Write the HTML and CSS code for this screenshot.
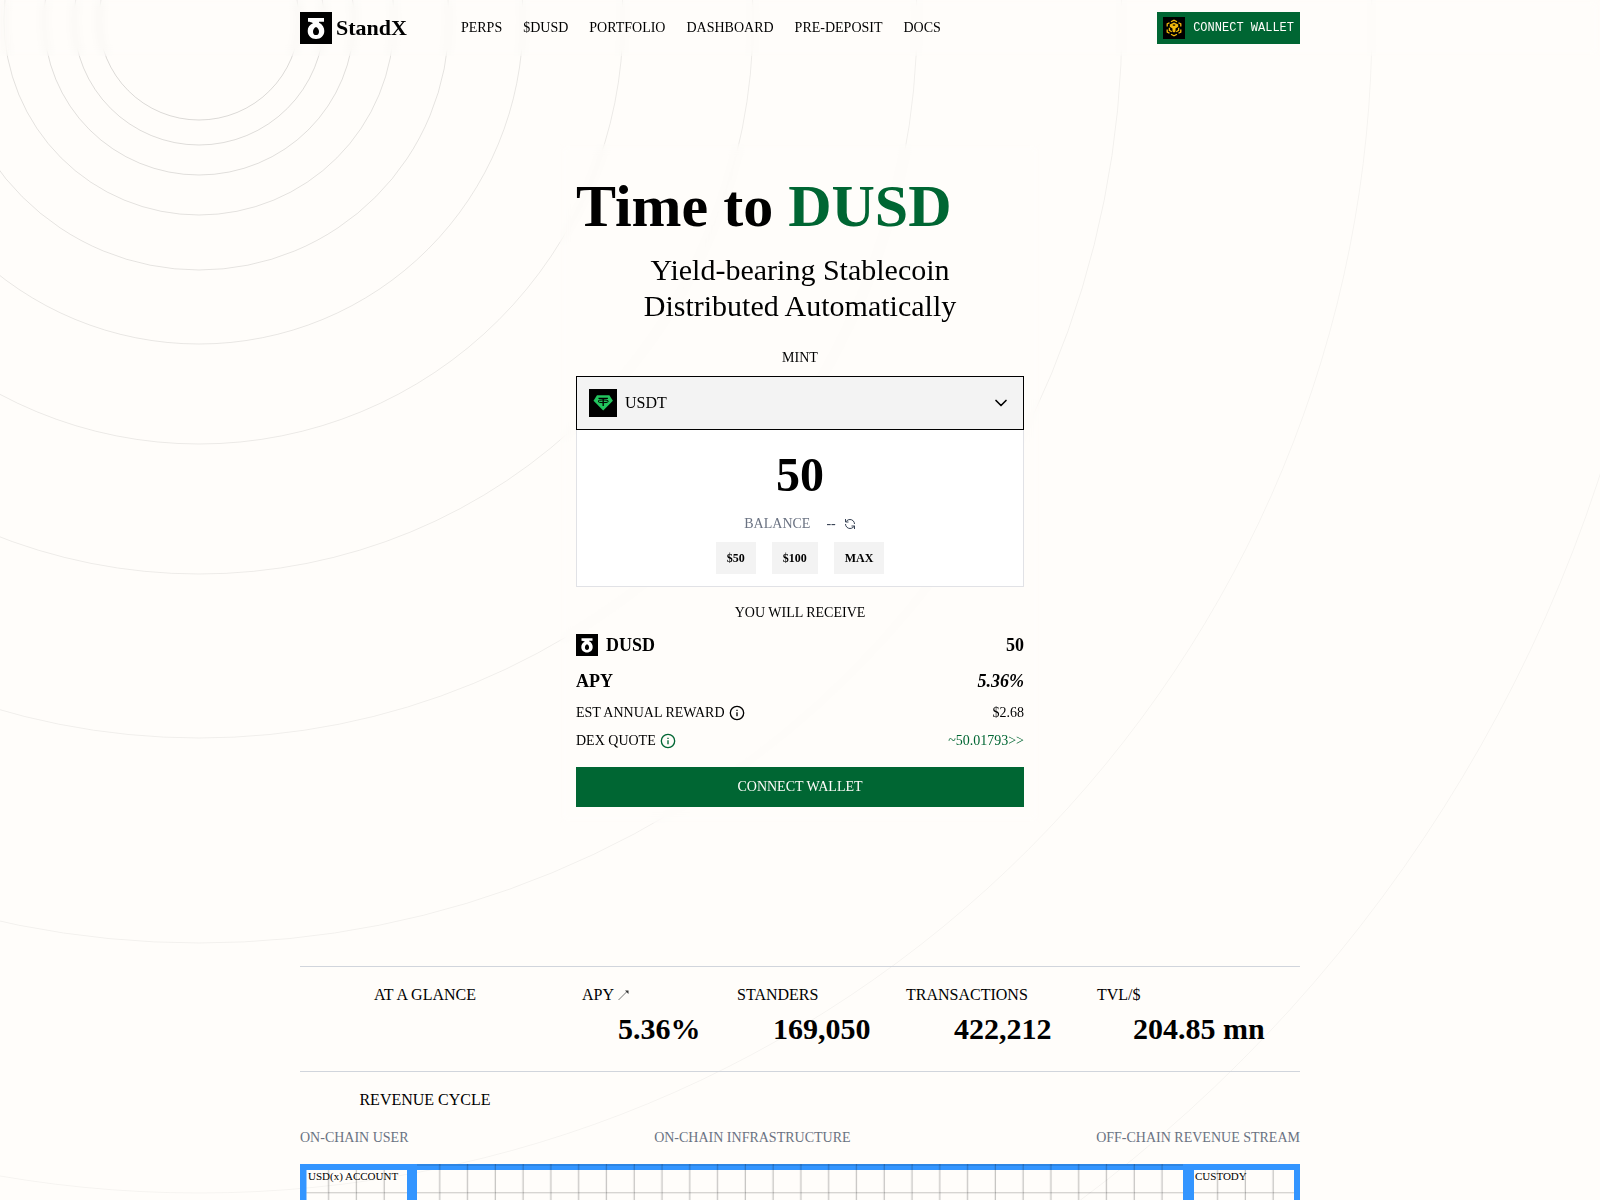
FILE: index.html
```html
<!DOCTYPE html>
<html lang="en">
<head>
  <meta charset="UTF-8">
  <meta name="viewport" content="width=device-width, initial-scale=1.0">
  <title>StandX</title>
  <link rel="stylesheet" href="styles.css">
</head>
<body>
  <svg class="rings" aria-hidden="true">
    <g fill="none" stroke="#000">
      <circle cx="199" cy="20" r="100" stroke-opacity="0.14"/>
      <circle cx="199" cy="20" r="125" stroke-opacity="0.13"/>
      <circle cx="199" cy="20" r="155" stroke-opacity="0.12"/>
      <circle cx="199" cy="20" r="195" stroke-opacity="0.11"/>
      <circle cx="199" cy="20" r="250" stroke-opacity="0.1"/>
      <circle cx="199" cy="20" r="324" stroke-opacity="0.09"/>
      <circle cx="199" cy="20" r="424" stroke-opacity="0.08"/>
      <circle cx="199" cy="20" r="554" stroke-opacity="0.07"/>
      <circle cx="199" cy="20" r="718" stroke-opacity="0.06"/>
      <circle cx="199" cy="20" r="923" stroke-opacity="0.05"/>
      <circle cx="199" cy="20" r="1173" stroke-opacity="0.04"/>
      <circle cx="199" cy="20" r="1473" stroke-opacity="0.04"/>
    </g>
  </svg>

  <svg class="symbols" aria-hidden="true">
    <symbol id="logo" viewBox="0 0 32 32">
      <rect width="32" height="32"/>
      <path fill="#fff" fill-rule="evenodd" d="M8 6h16v3.800h-4.500c-.6 0-.8.500-.3.900C22.500 12.500 24.300 15.600 24.300 19c0 4.700-3.500 8-8.300 8s-8.300-3.300-8.300-8c0-3.700 2-6.400 5.300-7.700C11.700 10.300 10 9.800 8 9.800zM16 15c-2 1-3 2.600-3 4.700 0 2 1.100 3.400 3 3.400s3-1.400 3-3.400c0-2.100-1-3.700-3-4.700z"/>
    </symbol>
    <symbol id="info" viewBox="0 0 24 24">
      <circle cx="12" cy="12" r="10" fill="none" stroke="currentColor" stroke-width="2"/>
      <path fill="currentColor" d="M11 7h2v2h-2zM11 11h2v6h-2z"/>
    </symbol>
  </svg>

  <header class="header">
    <div class="header-inner">
      <a class="brand" href="#">
        <svg class="brand-icon" aria-hidden="true"><use href="#logo"/></svg>
        <span>StandX</span>
      </a>
      <nav class="nav">
        <a href="#">PERPS</a>
        <a href="#">$DUSD</a>
        <a href="#">PORTFOLIO</a>
        <a href="#">DASHBOARD</a>
        <a href="#">PRE-DEPOSIT</a>
        <a href="#">DOCS</a>
      </nav>
      <button class="wallet" type="button">
        <svg width="22" height="22" viewBox="0 0 22 22" aria-hidden="true">
          <rect width="22" height="22"/>
          <g fill="none" stroke="#f0b90b" stroke-width="1.300">
            <path d="M8 4.800 11 3.200l3 1.600M15.500 5.700l2.300 1.300v2.600M17.800 12.400V15l-2.300 1.300M14 17.200l-3 1.600-3-1.600M6.500 16.300 4.200 15v-2.600M4.200 9.600V7l2.300-1.300"/>
            <path d="M6.400 10.800v2.600l2.400 1.400M15.600 10.800v2.600l-2.400 1.400"/>
          </g>
          <path fill="#f0b90b" d="M6.800 7.600 11 5.600l4.200 2v2.200l-2.700 1.600v3.200L11 15.600l-1.500-1v-3.200L6.800 9.800z"/>
          <path d="m11 7.200 1.700.8-1.700 1-1.700-1z"/>
        </svg>
        CONNECT WALLET
      </button>
    </div>
  </header>

  <main class="page">
    <section class="mint">
      <h1 class="title">Time to <span class="green">DUSD</span></h1>
      <p class="subtitle">Yield-bearing Stablecoin<br>Distributed Automatically</p>

      <label class="caption mint-caption" for="token">MINT</label>
      <div class="token">
        <svg width="28" height="28" viewBox="0 0 28 28" aria-hidden="true">
          <rect width="28" height="28"/>
          <path fill="#22c55e" d="M8 6.300h12.400l3.500 5.500L14.200 21.600 4.500 11.800z"/>
          <path fill="none" stroke="#000" stroke-width="1.300" d="M9.500 9.300h9.400M14.200 9.300v7.700"/>
          <ellipse cx="14.200" cy="12.300" rx="5.200" ry="1.400" fill="none" stroke="#000"/>
        </svg>
        <select class="token-select" id="token">
          <option>USDT</option>
          <option>USDC</option>
        </select>
        <svg class="chevron" width="20" height="20" viewBox="0 0 24 24" aria-hidden="true">
          <path fill="none" stroke="#000" stroke-width="2" stroke-linecap="round" stroke-linejoin="round" d="m6 9 6 6 6-6"/>
        </svg>
      </div>
      <div class="amount">
        <input class="amount-input" type="text" value="50" inputmode="decimal" aria-label="Amount">
        <div class="balance">
          <span>BALANCE</span>
          <span class="balance-value">--
            <button class="refresh" type="button" aria-label="Refresh balance">
              <svg width="12" height="12" viewBox="0 0 24 24" fill="none" stroke="currentColor" stroke-width="2" aria-hidden="true">
                <path d="M21 12a9 9 0 0 0-9-9 9.800 9.800 0 0 0-6.700 2.700L3 8M3 2v6h6M3 12a9 9 0 0 0 9 9 9.800 9.800 0 0 0 6.700-2.700L21 16M15 16h6v6"/>
              </svg>
            </button>
          </span>
        </div>
        <div class="presets">
          <button type="button">$50</button>
          <button type="button">$100</button>
          <button type="button">MAX</button>
        </div>
      </div>

      <p class="caption receive-caption">YOU WILL RECEIVE</p>
      <div class="row row-lg">
        <span class="row-token"><svg width="22" height="22" aria-hidden="true"><use href="#logo"/></svg>DUSD</span>
        <span>50</span>
      </div>
      <div class="row row-lg">
        <span>APY</span>
        <em>5.36%</em>
      </div>
      <div class="row">
        <span class="row-label">EST ANNUAL REWARD <svg width="16" height="16" aria-hidden="true"><use href="#info"/></svg></span>
        <span>$2.68</span>
      </div>
      <div class="row">
        <span class="row-label">DEX QUOTE <svg class="green" width="16" height="16" aria-hidden="true"><use href="#info"/></svg></span>
        <a class="green" href="#">~50.01793&gt;&gt;</a>
      </div>
      <button class="connect" type="button">CONNECT WALLET</button>
    </section>

    <section class="glance">
      <h2 class="section-title">AT A GLANCE</h2>
      <div class="stats">
        <div>
          <div class="stat-label">APY
            <svg width="12" height="12" viewBox="0 0 12 12" aria-hidden="true">
              <path stroke="#555" stroke-width="0.800" d="M.5 11 9.500 2"/>
              <path fill="#333" d="M7 1.500h3.500V5z"/>
            </svg>
          </div>
          <div class="stat-value">5.36%</div>
        </div>
        <div>
          <div class="stat-label">STANDERS</div>
          <div class="stat-value">169,050</div>
        </div>
        <div>
          <div class="stat-label">TRANSACTIONS</div>
          <div class="stat-value stat-value-wide">422,212</div>
        </div>
        <div>
          <div class="stat-label">TVL/$</div>
          <div class="stat-value">204.85 mn</div>
        </div>
      </div>
    </section>

    <section class="revenue">
      <h2 class="section-title">REVENUE CYCLE</h2>
      <div class="revenue-heads">
        <span>ON-CHAIN USER</span>
        <span>ON-CHAIN INFRASTRUCTURE</span>
        <span>OFF-CHAIN REVENUE STREAM</span>
      </div>
      <svg class="diagram" viewBox="0 0 1000 280" preserveAspectRatio="xMidYMin slice">
        <defs>
          <pattern id="cells" width="27.780" height="27.780" patternUnits="userSpaceOnUse" x="0.500" y="0.500">
            <path d="M28 0V28M0 .5H28" fill="none" stroke="#000" stroke-opacity="0.220"/>
            <path d="M.5 0V28" fill="none" stroke="#000" stroke-opacity="0.220"/>
          </pattern>
        </defs>
        <path fill="#3395ff" fill-rule="evenodd" d="M0 0h1000v280H0zM6.500 6h100.500v268H6.500zM117 6h766v268H117zM894 6h100v268H894z"/>
        <rect x="6.500" y="6" width="100.500" height="268" fill="url(#cells)"/>
        <rect x="117" y="0" width="766" height="274" fill="url(#cells)"/>
        <rect x="894" y="6" width="100" height="268" fill="url(#cells)"/>
        <text x="8" y="16">USD(x) ACCOUNT</text>
        <text x="895" y="16">CUSTODY</text>
      </svg>
    </section>
  </main>
</body>
</html>
```
FILE: styles.css
```css
* {
  box-sizing: border-box;
}

body {
  margin: 0;
  min-height: 100vh;
  display: flex;
  flex-direction: column;
  position: relative;
  background-color: #fffdfa;
  color: #000;
  font-family: "Liberation Serif", "Times New Roman", serif;
  font-size: 14px;
  line-height: 20px;
}

h1, h2, p {
  margin: 0;
}

a {
  color: inherit;
  text-decoration: none;
}

button, input, select {
  font: inherit;
  color: inherit;
  border: none;
  padding: 0;
  margin: 0;
  background: none;
}

button {
  cursor: pointer;
}

svg {
  flex-shrink: 0;
}

.rings {
  position: absolute;
  top: 0;
  left: 0;
  width: 100%;
  height: 100%;
  z-index: -1;
}

.symbols {
  display: none;
}

.green {
  color: #006633;
}

/* header */
.header {
  position: sticky;
  top: 0;
  z-index: 10;
  backdrop-filter: blur(4px);
}

.header-inner {
  display: flex;
  align-items: center;
  max-width: 1000px;
  height: 56px;
  margin: 0 auto;
}

.brand {
  display: flex;
  align-items: center;
  gap: 4px;
  font-size: 22px;
  font-weight: bold;
}

.brand-icon {
  width: 32px;
  height: 32px;
}

.nav {
  display: flex;
  gap: 21px;
  margin-left: 54px;
}

.wallet {
  display: flex;
  align-items: center;
  gap: 8px;
  height: 32px;
  margin-left: auto;
  padding: 0 6px;
  background-color: #006633;
  color: #fffdfa;
  font-family: "Liberation Mono", "Courier New", monospace;
  font-size: 12px;
}

/* mint form */
.page {
  flex: 1;
  display: flex;
  flex-direction: column;
}

.mint {
  display: flex;
  flex-direction: column;
  width: 100%;
  max-width: 480px;
  margin: 88px auto 0;
  padding: 32px 16px 16px;
  backdrop-filter: blur(4px);
}

.title {
  font-size: 60px;
  line-height: 60px;
}

.subtitle {
  margin-top: 16px;
  font-size: 30px;
  line-height: 36px;
  text-align: center;
}

.caption {
  text-align: center;
}

.mint-caption {
  margin: 24px 0 8px;
}

.token {
  display: flex;
  align-items: center;
  gap: 8px;
  height: 54px;
  padding: 0 12px;
  border: 1px solid #000;
  background-color: #f3f3f3;
}

.token-select {
  flex: 1;
  height: 100%;
  margin-right: -28px;
  appearance: none;
  font-size: 16px;
}

.chevron {
  pointer-events: none;
}

.amount {
  display: flex;
  flex-direction: column;
  align-items: center;
  gap: 8px;
  padding: 12px;
  border: 1px solid #e1e2e6;
  border-top: none;
  background-color: #fff;
}

.amount-input {
  width: 100%;
  height: 64px;
  font-size: 48px;
  font-weight: bold;
  text-align: center;
}

.balance {
  display: flex;
  gap: 16px;
  color: #6a7282;
}

.balance-value {
  display: flex;
  align-items: center;
  gap: 8px;
  color: #364153;
}

.refresh {
  display: flex;
}

.presets {
  display: flex;
  gap: 16px;
}

.presets button {
  height: 32px;
  padding: 0 11px;
  background-color: #f3f3f3;
  font-size: 12px;
  font-weight: bold;
}

.receive-caption {
  margin: 16px 0 0;
}

.row {
  display: flex;
  justify-content: space-between;
  margin-top: 8px;
}

.row-lg {
  font-size: 18px;
  line-height: 28px;
  font-weight: bold;
}

.row-token {
  display: flex;
  align-items: center;
  gap: 8px;
}

.row-label {
  display: flex;
  align-items: center;
  gap: 4px;
}

.connect {
  height: 40px;
  margin-top: 16px;
  background-color: #006633;
  color: #fffdfa;
}

/* stats */
.glance, .revenue {
  width: 100%;
  max-width: 1000px;
  margin: 0 auto;
  padding-top: 16px;
  border-top: 1px solid #d1d5dc;
}

.glance {
  display: flex;
  margin-top: 143px;
  padding-bottom: 24px;
}

.section-title {
  width: 25%;
  font-size: 16px;
  font-weight: normal;
  line-height: 24px;
  text-align: center;
}

.stats {
  flex: 1;
  display: grid;
  grid-template-columns: 155fr 169fr 191fr 203fr;
  padding-left: 32px;
}

.stat-label {
  display: flex;
  align-items: center;
  gap: 4px;
  font-size: 16px;
  line-height: 24px;
}

.stat-value {
  margin-top: 4px;
  padding-left: 36px;
  font-size: 30px;
  line-height: 36px;
  font-weight: bold;
  white-space: nowrap;
}

.stat-value-wide {
  padding-left: 48px;
}

/* revenue diagram */
.revenue {
  flex: 1;
  display: flex;
  flex-direction: column;
}

.revenue-heads {
  display: flex;
  justify-content: space-between;
  margin: 16px 0;
  color: #6a7282;
}

.diagram {
  flex: 1 0 0;
  min-height: 32px;
  width: 100%;
  font-size: 11px;
}
```
